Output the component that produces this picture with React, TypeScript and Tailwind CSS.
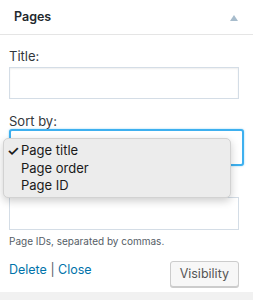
import React from 'react';

const font = { fontFamily: 'Inter, "Noto Sans", sans-serif' };

export default function App() {
  return (
    <div className="relative h-[300px] w-[253px] overflow-hidden bg-[#f1f1f1]" style={font}>
      <div className="bg-white pb-[5px]">
        {/* Header */}
        <div className="flex h-[35px] items-center justify-between border-b border-[#e5e5e5] pl-[14px] pr-[15px]">
          <span className="text-[12.5px] font-semibold text-[#23282d]">Pages</span>
          <svg width="8" height="6" viewBox="0 0 8 6" className="mt-[1px]">
            <path d="M4 0 L8 6 L0 6 Z" fill="#a7bccc" />
          </svg>
        </div>

        <div className="px-[9px]">
          <label className="mt-[12px] block text-[13px] leading-[18px] text-[#32373c]">Title:</label>
          <div className="mt-[2px] h-[32px] w-[230px] border border-[#d4dde6] bg-white shadow-[inset_0_1px_2px_rgba(0,0,0,0.07)]" />

          <label className="mt-[14px] block text-[13px] leading-[16px] text-[#32373c]">Sort by:</label>
          <div className="h-[37px] w-[235px] rounded-[3px] border-2 border-[#3eb0ef] bg-white shadow-[0_0_2px_rgba(62,176,239,0.6)]" />

          {/* label hidden under the open menu */}
          <div className="h-[31px]" />
          <div className="h-[33px] w-[230px] border border-[#d4dde6] bg-white" />

          <p className="mt-[4px] text-[10px] leading-[14px] text-[#555d66]">Page IDs, separated by commas.</p>

          <div className="mt-[13px] flex w-[230px] items-start justify-between">
            <div className="text-[12.5px] leading-[18px]">
              <span className="text-[#0073aa]">Delete</span>
              <span className="text-[#555d66]"> | </span>
              <span className="text-[#0073aa]">Close</span>
            </div>
            <button className="h-[26px] rounded-[3px] border border-[#cccccc] bg-[#f7f7f7] px-[9px] text-[12.5px] text-[#555555] shadow-[0_1px_0_#cccccc]">
              Visibility
            </button>
          </div>
        </div>
      </div>

      {/* Open select menu */}
      <div className="absolute left-[3px] top-[138px] h-[60px] w-[228px] rounded-[5px] border border-[#d2d2d2] bg-[#ececec] pt-[3px] shadow-[0_3px_8px_rgba(0,0,0,0.2)]">
        {[
          { t: 'Page title', on: true },
          { t: 'Page order', on: false },
          { t: 'Page ID', on: false },
        ].map((o) => (
          <div key={o.t} className="flex h-[17.5px] items-center text-[13px] text-[#1a1a1a]">
            <span className="w-[17px] pl-[3px] text-[14px] font-semibold">{o.on ? '✓' : ''}</span>
            <span>{o.t}</span>
          </div>
        ))}
      </div>
    </div>
  );
}
